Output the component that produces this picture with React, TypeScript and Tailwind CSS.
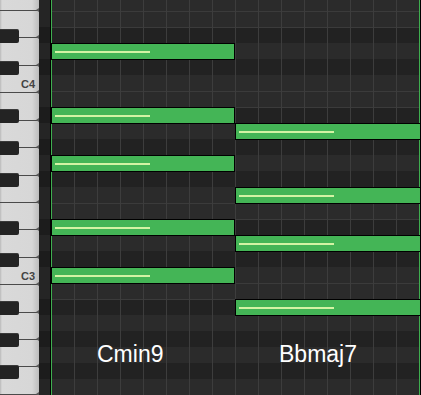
import React from 'react';

// piano roll rows, top to bottom (first row is cut 5px by the top edge)
const ROWS = [
  'F4', 'E4', 'Eb4', 'D4', 'Db4', 'C4', 'B3', 'Bb3', 'A3', 'Ab3', 'G3', 'Gb3', 'F3',
  'E3', 'Eb3', 'D3', 'Db3', 'C3', 'B2', 'Bb2', 'A2', 'Ab2', 'G2', 'Gb2', 'F2',
];
const ROW_H = 16;
const ROW_OFFSET = -5;

const isBlack = (name: string) => name.length === 3 && name[1] === 'b';
const hasLine = (name: string) => name[0] === 'E' || name[0] === 'B';
const rowTop = (name: string) => ROW_OFFSET + ROWS.indexOf(name) * ROW_H;

interface Chord {
  name: string;
  left: number;
  width: number;
  notes: string[];
}

const CHORDS: Chord[] = [
  { name: 'Cmin9', left: 0, width: 184, notes: ['D4', 'Bb3', 'G3', 'Eb3', 'C3'] },
  { name: 'Bbmaj7', left: 184, width: 186, notes: ['A3', 'F3', 'D3', 'Bb2'] },
];

const WHITE_KEY_H = 192 / 7;

const Keyboard: React.FC = () => {
  const keys = Array.from({ length: 15 });
  return (
    <div className="relative w-[39px] h-full overflow-hidden bg-[linear-gradient(to_right,#b9b9b9_0px,#d9d9d9_2px,#d7d7d7_32px,#bcbcbc_39px)]">
      <div className="flex flex-col">
        <div className="h-[10px]" />
        {keys.map((_, i) => (
          <div
            key={i}
            className="relative shrink-0 border-t border-[#4a4a4a]"
            style={{ height: WHITE_KEY_H }}
          >
            <span className="absolute -top-[3px] right-0 w-0 h-0 border-y-[2.5px] border-y-transparent border-r-[3px] border-r-[#5a5a5a]" />
          </div>
        ))}
      </div>

      {ROWS.filter(isBlack).map((name) => (
        <div
          key={name}
          className="absolute left-0 w-[19px] h-[14px] rounded-r-[2px] bg-[#232323] border-t border-[#3a3a3a]"
          style={{ top: rowTop(name) + 2 }}
        />
      ))}

      <span
        className="absolute right-[4px] text-[11px] leading-none font-bold text-[#444]"
        style={{ top: 79, fontFamily: '"Liberation Sans", Arial, sans-serif' }}
      >
        C4
      </span>
      <span
        className="absolute right-[4px] text-[11px] leading-none font-bold text-[#444]"
        style={{ top: 271, fontFamily: '"Liberation Sans", Arial, sans-serif' }}
      >
        C3
      </span>
    </div>
  );
};

const Note: React.FC<{ top: number; left: number; width: number }> = ({ top, left, width }) => (
  <div
    className="absolute h-[17px] border border-black bg-[#44b556] flex items-center"
    style={{ top, left, width }}
  >
    <div className="ml-[3px] w-[95px] h-[2px] bg-[#d3f3a4]" />
  </div>
);

export default function App() {
  return (
    <div
      className="flex w-[421px] h-[395px] overflow-hidden bg-black"
      style={{ fontFamily: '"Liberation Sans", Arial, sans-serif' }}
    >
      <Keyboard />

      {/* dark strip between keys and grid */}
      <div className="w-[11px] h-full overflow-hidden">
        <div className="flex flex-col -mt-[5px]">
          {ROWS.map((name) => (
            <div
              key={name}
              className={`h-4 shrink-0 ${isBlack(name) ? 'bg-[#1c1c1c]' : 'bg-[#252525]'}`}
            />
          ))}
        </div>
      </div>
      <div className="w-px h-full bg-black" />

      {/* grid */}
      <div className="relative w-[370px] h-full overflow-hidden">
        <div className="flex flex-col -mt-[5px]">
          {ROWS.map((name) => (
            <div
              key={name}
              className={`h-4 shrink-0 ${isBlack(name) ? 'bg-[#222222]' : 'bg-[#2b2b2b]'} ${
                hasLine(name) ? 'border-t border-[#3b3b3b]' : ''
              }`}
            />
          ))}
        </div>

        <div className="absolute inset-0 flex">
          {Array.from({ length: 16 }).map((_, i) => (
            <div
              key={i}
              className={`w-[23px] h-full shrink-0 border-l ${
                i === 0 ? 'border-[#3fae4f]' : 'border-[#3d3d3d]'
              }`}
            />
          ))}
          <div className="w-px h-full bg-[#3fae4f]" />
          <div className="w-px h-full bg-black" />
        </div>

        {CHORDS.map((chord) =>
          chord.notes.map((n) => (
            <Note key={chord.name + n} top={rowTop(n)} left={chord.left} width={chord.width} />
          ))
        )}

        <span className="absolute left-[46px] top-[343px] text-[23px] leading-none text-white">
          Cmin9
        </span>
        <span className="absolute left-[228px] top-[343px] text-[23px] leading-none text-white">
          Bbmaj7
        </span>
      </div>
    </div>
  );
}
